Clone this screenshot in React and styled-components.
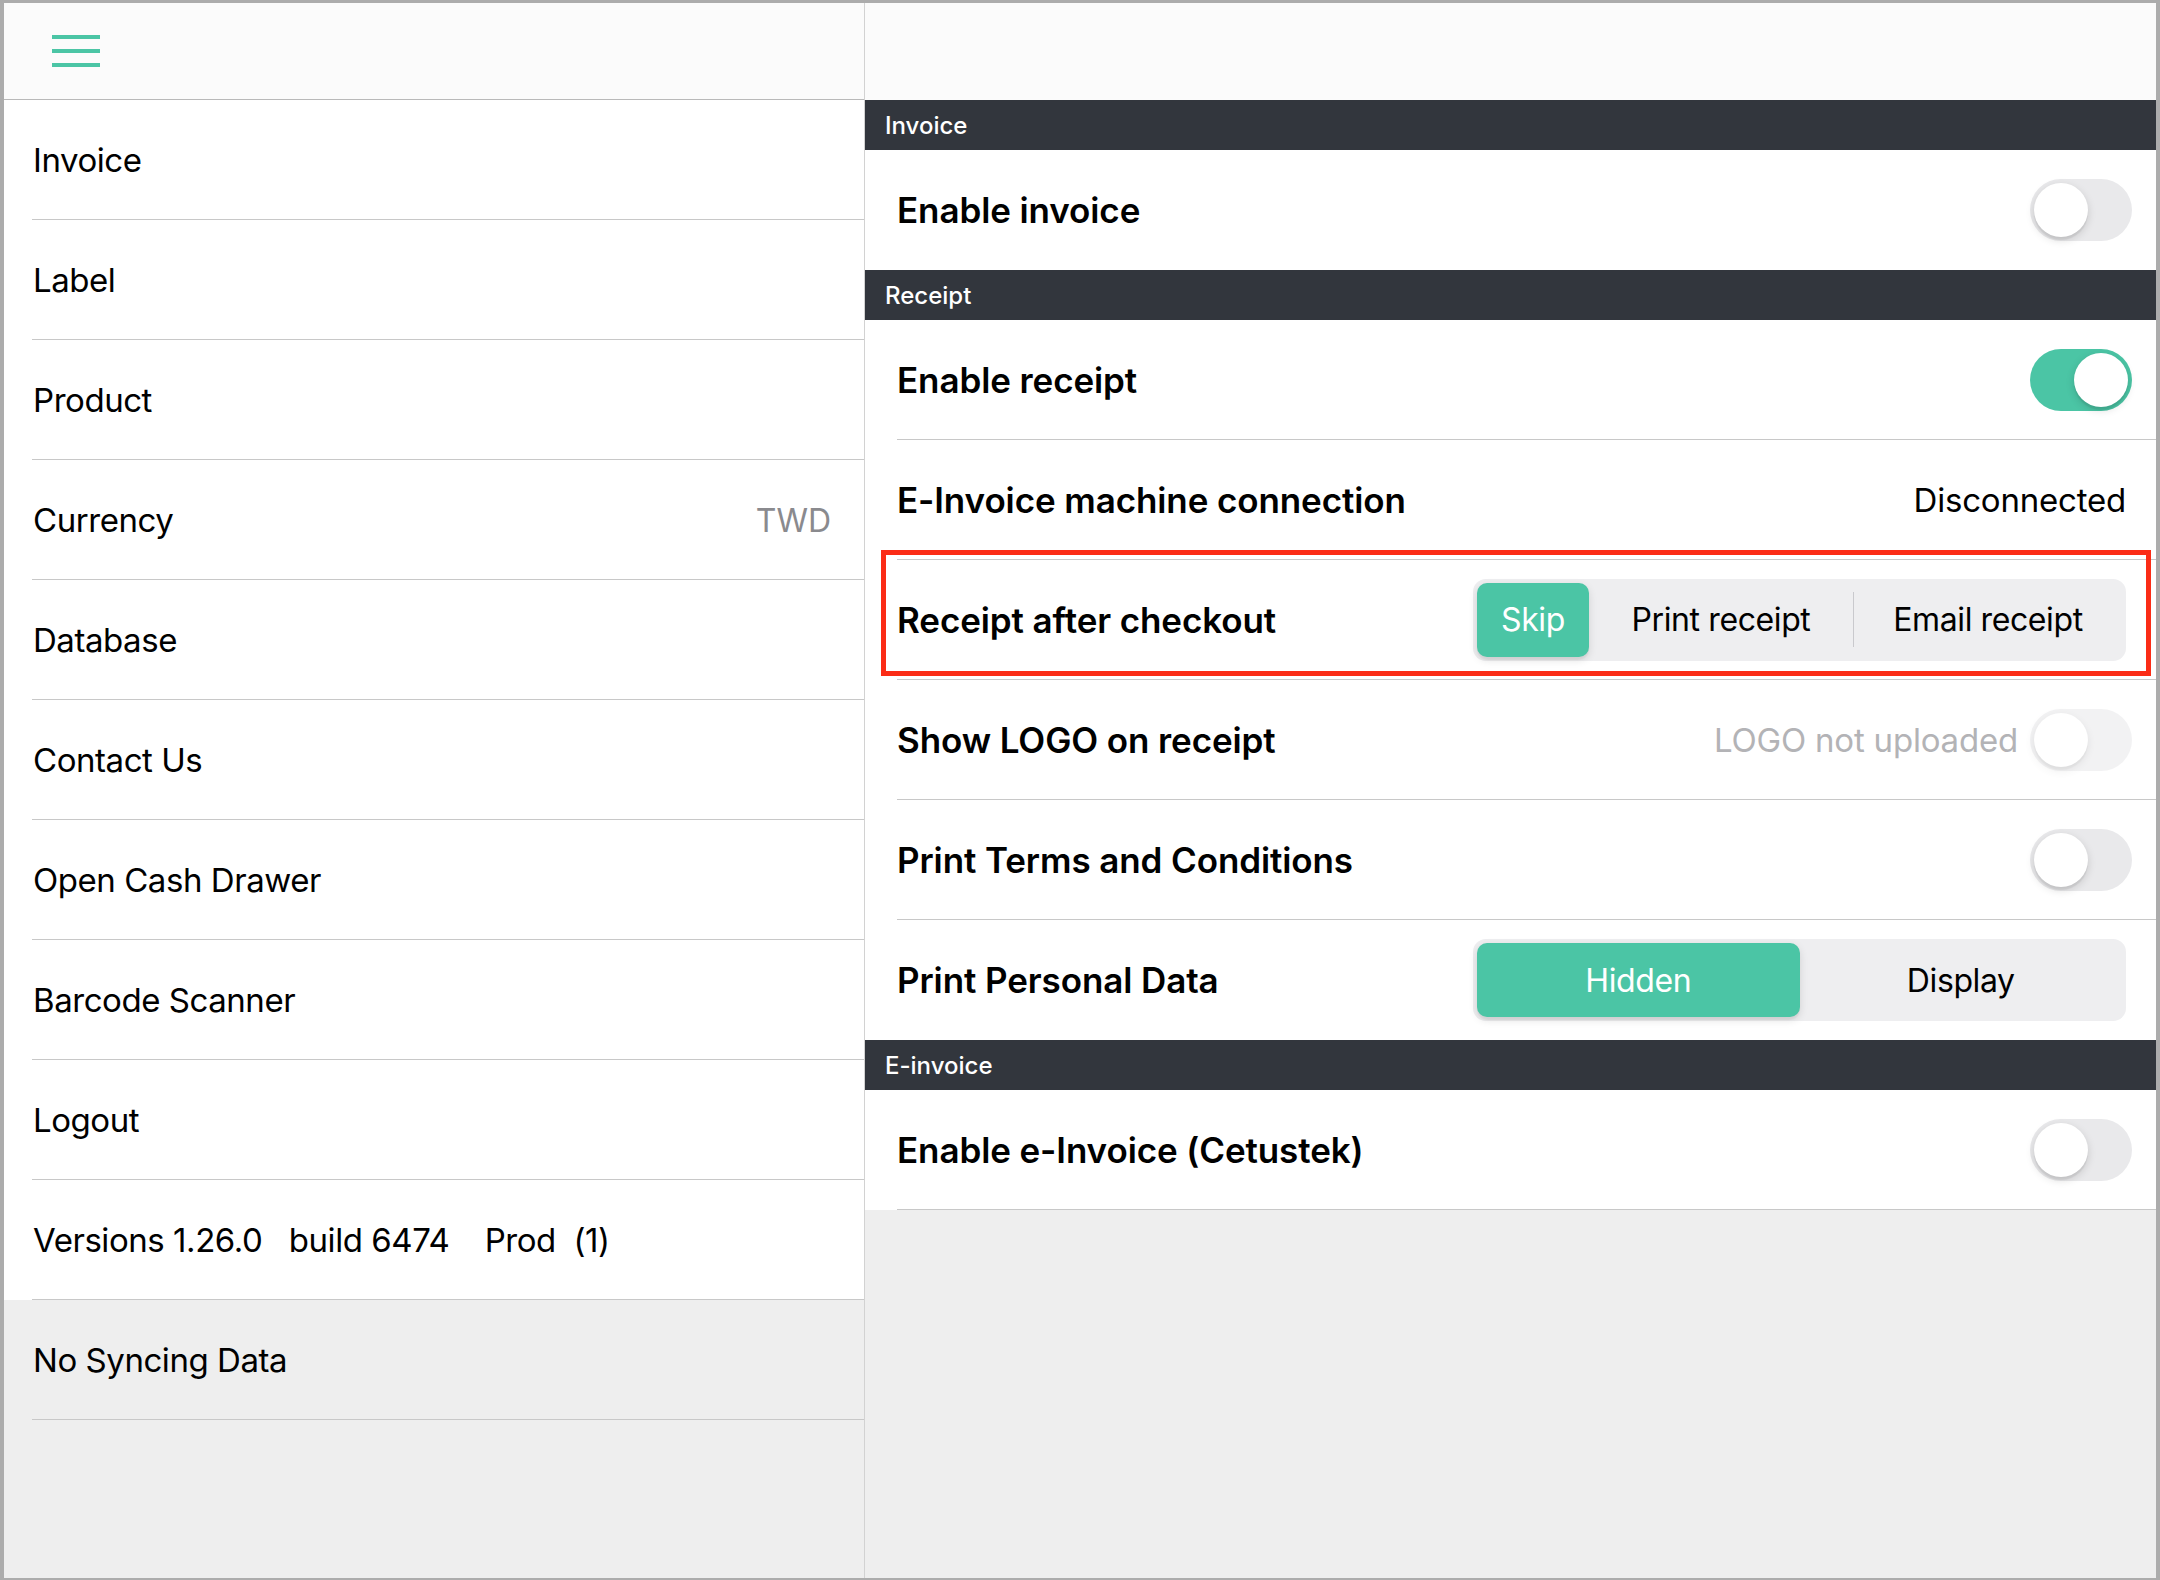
import React from 'react';
import styled, { createGlobalStyle } from 'styled-components';

const GlobalStyle = createGlobalStyle`
  html, body {
    margin: 0;
    padding: 0;
    background: #ffffff;
  }
  * {
    box-sizing: border-box;
  }
`;

const Frame = styled.div`
  width: 2160px;
  height: 1580px;
  display: flex;
  border-style: solid;
  border-color: #acacac;
  border-width: 3px 4px 2px 4px;
  font-family: Inter, "Noto Sans", sans-serif;
  color: #000;
  overflow: hidden;
`;

const Sidebar = styled.div`
  width: 861px;
  flex-shrink: 0;
  display: flex;
  flex-direction: column;
  background: #eeeeee;
  border-right: 1px solid #d2d2d2;
`;

const Detail = styled.div`
  flex: 1;
  display: flex;
  flex-direction: column;
  background: #eeeeee;
`;

const TopBar = styled.div`
  height: 97px;
  flex-shrink: 0;
  display: flex;
  align-items: center;
  padding-left: 48px;
  background: #fbfbfb;
  border-bottom: ${({ line }) => (line ? '1px solid #b9b9b9' : 'none')};
`;

const MenuRow = styled.div`
  height: 120px;
  flex-shrink: 0;
  display: flex;
  align-items: center;
  padding-left: 28px;
  background: ${({ muted }) => (muted ? '#eeeeee' : '#ffffff')};
`;

const MenuInner = styled.div`
  flex: 1;
  height: 100%;
  display: flex;
  align-items: center;
  justify-content: space-between;
  padding-right: 33px;
  border-bottom: 1px solid #c8c8c8;
  padding-top: 1px;
`;

const MenuLabel = styled.span`
  font-size: 33px;
  letter-spacing: -0.45px;
  white-space: pre;
  padding-left: 1px;
`;

const MenuValue = styled.span`
  font-size: 32px;
  color: #8a8a8e;
`;

const SectionHeader = styled.div`
  height: 50px;
  flex-shrink: 0;
  display: flex;
  align-items: center;
  padding-left: 20px;
  background: #32363d;
  color: #ffffff;
  font-size: 24px;
  font-weight: 500;
`;

const SettingRow = styled.div`
  position: relative;
  height: 120px;
  flex-shrink: 0;
  display: flex;
  align-items: center;
  padding-left: 32px;
  background: #ffffff;
`;

const SettingInner = styled.div`
  flex: 1;
  height: 100%;
  display: flex;
  align-items: center;
  justify-content: space-between;
  padding-right: 24px;
  border-bottom: ${({ last }) => (last ? 'none' : '1px solid #c8c8c8')};
`;

const SettingLabel = styled.span`
  font-size: 35px;
  font-weight: 600;
  letter-spacing: -0.1px;
`;

const Right = styled.div`
  display: flex;
  align-items: center;
  gap: 12px;
`;

const ValueText = styled.span`
  font-size: 33px;
  letter-spacing: -0.2px;
  color: ${({ dim }) => (dim ? '#b3b3b6' : '#000')};
  margin-right: ${({ dim }) => (dim ? '0' : '6px')};
`;

const Track = styled.div`
  position: relative;
  width: 102px;
  height: 62px;
  border-radius: 31px;
  background: ${({ on }) => (on ? '#4bc5a5' : '#e9e9eb')};
  opacity: ${({ disabled }) => (disabled ? 0.55 : 1)};
`;

const Knob = styled.div`
  position: absolute;
  top: 4px;
  left: ${({ on }) => (on ? '44px' : '4px')};
  width: 54px;
  height: 54px;
  border-radius: 50%;
  background: #ffffff;
  box-shadow: 0 3px 8px rgba(0, 0, 0, 0.15), 0 3px 1px rgba(0, 0, 0, 0.06);
`;

const Segmented = styled.div`
  display: flex;
  align-items: center;
  width: 653px;
  height: 82px;
  padding: 4px;
  margin-right: 6px;
  border-radius: 13px;
  background: #eeeef0;
`;

const Segment = styled.div`
  position: relative;
  height: 74px;
  display: flex;
  align-items: center;
  justify-content: center;
  flex: ${({ w }) => (w ? `0 0 ${w}px` : '1')};
  border-radius: 10px;
  font-size: 32px;
  letter-spacing: -0.4px;
  color: ${({ active }) => (active ? '#ffffff' : '#000')};
  background: ${({ active }) => (active ? '#4bc5a5' : 'transparent')};
  box-shadow: ${({ active }) => (active ? '0 3px 8px rgba(0,0,0,0.12), 0 3px 1px rgba(0,0,0,0.04)' : 'none')};
`;

const SegDivider = styled.div`
  width: 1px;
  height: 55px;
  background: #c9c9cd;
  flex-shrink: 0;
`;

const Highlight = styled.div`
  position: absolute;
  top: -10px;
  left: 16px;
  right: 5px;
  height: 126px;
  border: 5px solid #fb2c16;
  pointer-events: none;
`;

const Filler = styled.div`
  flex: 1;
  background: #eeeeee;
`;

function MenuIcon() {
  return (
    <svg width="48" height="32" viewBox="0 0 48 32">
      <rect x="0" y="0" width="48" height="4" fill="#4bc5a5" />
      <rect x="0" y="14" width="48" height="4" fill="#4bc5a5" />
      <rect x="0" y="28" width="48" height="4" fill="#4bc5a5" />
    </svg>
  );
}

function Toggle({ on, disabled }) {
  return (
    <Track on={on ? 1 : 0} disabled={disabled}>
      <Knob on={on ? 1 : 0} />
    </Track>
  );
}

const menu = [
  { label: 'Invoice' },
  { label: 'Label' },
  { label: 'Product' },
  { label: 'Currency', value: 'TWD' },
  { label: 'Database' },
  { label: 'Contact Us' },
  { label: 'Open Cash Drawer' },
  { label: 'Barcode Scanner' },
  { label: 'Logout' },
  { label: 'Versions 1.26.0   build 6474    Prod  (1)' },
  { label: 'No Syncing Data', muted: true },
];

export default function App() {
  return (
    <>
      <GlobalStyle />
      <Frame>
        <Sidebar>
          <TopBar line>
            <MenuIcon />
          </TopBar>
          {menu.map((item) => (
            <MenuRow key={item.label} muted={item.muted}>
              <MenuInner>
                <MenuLabel>{item.label}</MenuLabel>
                {item.value && <MenuValue>{item.value}</MenuValue>}
              </MenuInner>
            </MenuRow>
          ))}
          <Filler />
        </Sidebar>
        <Detail>
          <TopBar />
          <SectionHeader>Invoice</SectionHeader>
          <SettingRow>
            <SettingInner last>
              <SettingLabel>Enable invoice</SettingLabel>
              <Toggle />
            </SettingInner>
          </SettingRow>
          <SectionHeader>Receipt</SectionHeader>
          <SettingRow>
            <SettingInner>
              <SettingLabel>Enable receipt</SettingLabel>
              <Toggle on />
            </SettingInner>
          </SettingRow>
          <SettingRow>
            <SettingInner>
              <SettingLabel>E-Invoice machine connection</SettingLabel>
              <ValueText>Disconnected</ValueText>
            </SettingInner>
          </SettingRow>
          <SettingRow>
            <SettingInner>
              <SettingLabel>Receipt after checkout</SettingLabel>
              <Segmented>
                <Segment active w={112}>Skip</Segment>
                <Segment w={264}>Print receipt</Segment>
                <SegDivider />
                <Segment>Email receipt</Segment>
              </Segmented>
            </SettingInner>
            <Highlight />
          </SettingRow>
          <SettingRow>
            <SettingInner>
              <SettingLabel>Show LOGO on receipt</SettingLabel>
              <Right>
                <ValueText dim>LOGO not uploaded</ValueText>
                <Toggle disabled />
              </Right>
            </SettingInner>
          </SettingRow>
          <SettingRow>
            <SettingInner>
              <SettingLabel>Print Terms and Conditions</SettingLabel>
              <Toggle />
            </SettingInner>
          </SettingRow>
          <SettingRow>
            <SettingInner last>
              <SettingLabel>Print Personal Data</SettingLabel>
              <Segmented>
                <Segment active>Hidden</Segment>
                <Segment>Display</Segment>
              </Segmented>
            </SettingInner>
          </SettingRow>
          <SectionHeader>E-invoice</SectionHeader>
          <SettingRow>
            <SettingInner>
              <SettingLabel>Enable e-Invoice (Cetustek)</SettingLabel>
              <Toggle />
            </SettingInner>
          </SettingRow>
          <Filler />
        </Detail>
      </Frame>
    </>
  );
}
